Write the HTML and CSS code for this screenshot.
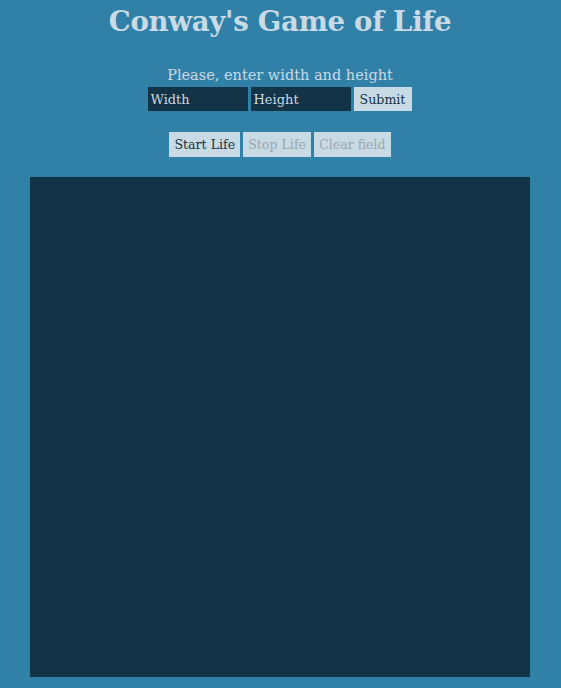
FILE: index.html
```html
<!DOCTYPE html>
<html>
<head>
<meta charset="utf-8">
<link rel="stylesheet" href="styles.css">
</head>
<body>
<div class="page">
  <h1 class="title">Conway's Game of Life</h1>
  <p class="hint">Please, enter width and height</p>
  <form class="size-form">
    <input class="field" type="text" placeholder="Width">
    <input class="field" type="text" placeholder="Height">
    <button class="btn btn-submit" type="button">Submit</button>
  </form>
  <div class="controls">
    <button class="btn" type="button">Start Life</button>
    <button class="btn" type="button" disabled>Stop Life</button>
    <button class="btn" type="button" disabled>Clear field</button>
  </div>
  <div class="field-area"></div>
</div>
</body>
</html>
```
FILE: styles.css
```css
html, body {
  margin: 0;
  padding: 0;
  background: #3180a8;
}
body {
  font-family: "DejaVu Serif", "Liberation Serif", serif;
  color: #c8dbe5;
}
.page {
  display: flex;
  flex-direction: column;
  align-items: center;
  padding-top: 5px;
  padding-right: 1px;
}
.title {
  margin: 0;
  font-size: 27.6px;
  line-height: 34px;
  font-weight: bold;
  letter-spacing: -0.3px;
}
.hint {
  margin: 26px 0 0;
  font-size: 14.5px;
  line-height: 20px;
}
.size-form {
  display: flex;
  gap: 3px;
  margin-top: 2px;
  padding-right: 1px;
}
.field {
  box-sizing: border-box;
  width: 100px;
  height: 24px;
  border: none;
  margin: 0;
  padding: 0 3px;
  background: #133347;
  color: #c8dbe5;
  font-family: inherit;
  font-size: 13px;
  outline: none;
}
.field::placeholder {
  color: #c8dbe5;
  opacity: 1;
}
.btn {
  box-sizing: border-box;
  height: 24px;
  border: none;
  margin: 0;
  padding: 0 5px;
  background: #c8dbe5;
  color: #133347;
  font-family: inherit;
  font-size: 12.6px;
}
.btn-submit {
  width: 58px;
  padding: 0;
}
.btn:disabled {
  color: #9aa5ab;
}
.controls {
  display: flex;
  gap: 3px;
  margin-top: 21px;
}
.controls .btn {
  height: 25px;
}
.field-area {
  width: 500px;
  height: 500px;
  margin-top: 20px;
  background: #133347;
}
```
